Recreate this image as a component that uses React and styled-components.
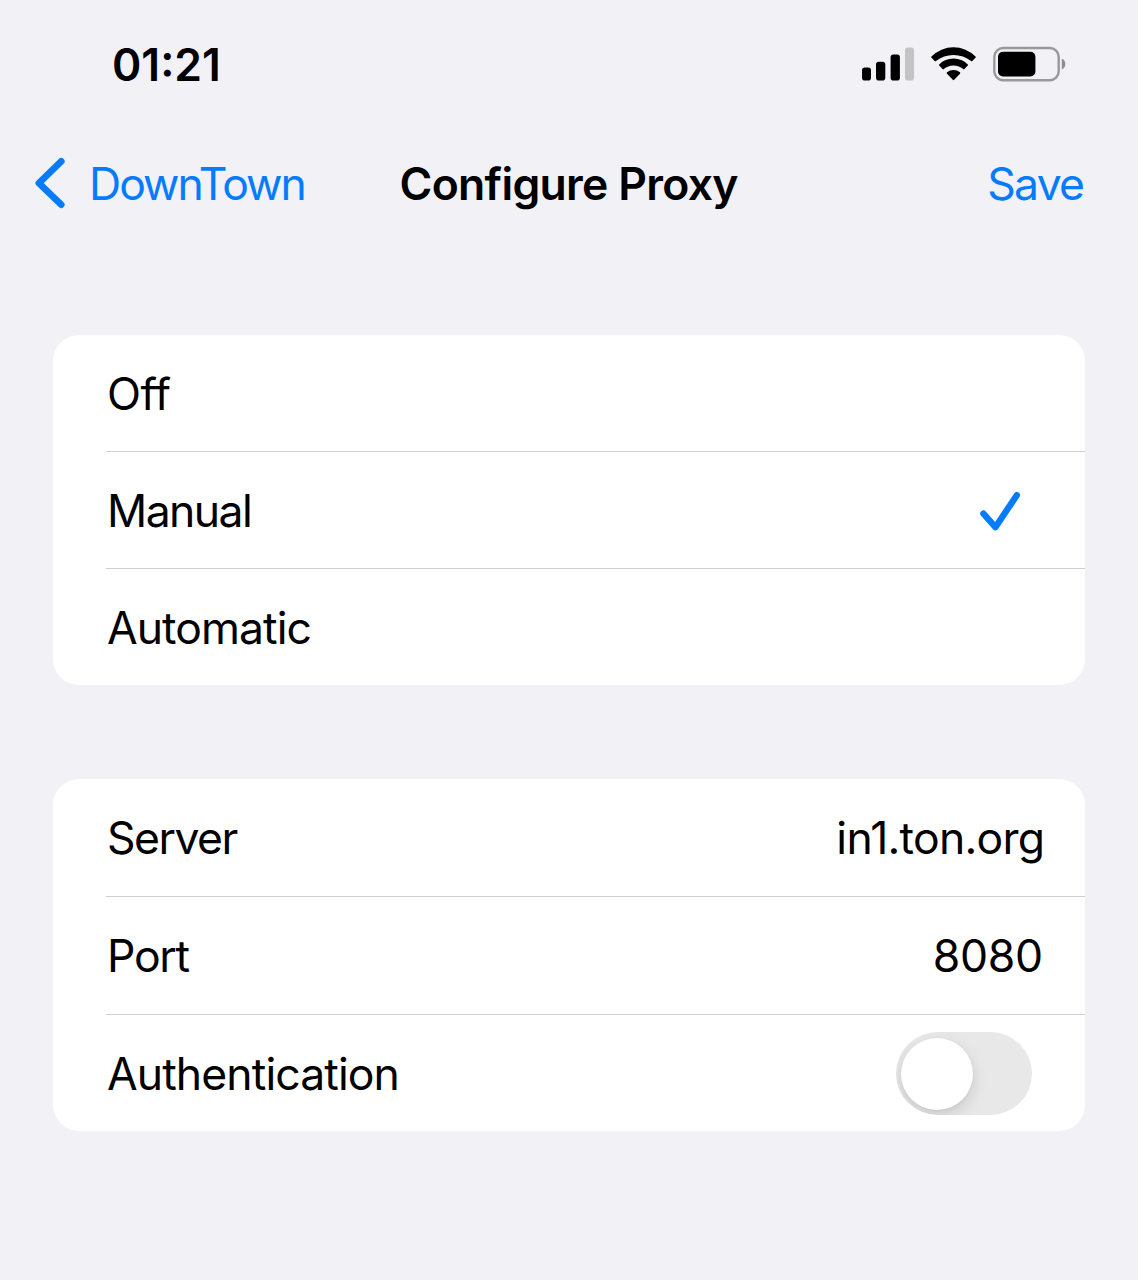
import React from "react";
import styled, { createGlobalStyle } from "styled-components";

const BLUE = "#067bfb";

const GlobalStyle = createGlobalStyle`
  * { box-sizing: border-box; }
  body {
    margin: 0;
    background: #f1f1f6;
    font-family: Inter, "Liberation Sans", sans-serif;
    color: #000;
  }
`;

const Screen = styled.div`
  width: 1138px;
  height: 1280px;
  overflow: hidden;
  display: flex;
  flex-direction: column;
  background: #f1f1f6;
`;

const Label = styled.span`
  font-size: 44.5px;
  line-height: 54px;
  white-space: nowrap;
  font-weight: ${(p) => p.$weight || 400};
  letter-spacing: ${(p) => p.$track || 0}px;
  margin-right: ${(p) => -(p.$track || 0)}px;
  padding-top: ${(p) => p.$drop || 0}px;
`;

const StatusBar = styled.header`
  height: 128px;
  padding: 0 72px 0 112px;
  display: flex;
  align-items: center;
  justify-content: space-between;
`;

const StatusIcons = styled.div`
  display: flex;
  align-items: center;
  gap: 17px;
  svg { display: block; }
`;

const NavBar = styled.nav`
  height: 109px;
  padding: 0 53px 0 34px;
  display: grid;
  grid-template-columns: 1fr auto 1fr;
  align-items: center;
`;

const NavButton = styled.button`
  display: flex;
  align-items: center;
  gap: 23px;
  justify-self: ${(p) => p.$side};
  padding: 0;
  border: 0;
  background: none;
  font-family: inherit;
  color: ${BLUE};
  svg { display: block; }
`;

const Title = styled.h1`
  margin: 0;
  padding-left: 19px;
  line-height: 54px;
  display: flex;
`;

const Groups = styled.main`
  padding: 98px 53px 0;
  display: flex;
  flex-direction: column;
  gap: 94px;
`;

const Group = styled.section`
  padding-left: 53px;
  display: flex;
  flex-direction: column;
  background: #fff;
  border-radius: 26px;
`;

const Row = styled.div`
  height: ${(p) => p.$height || 117}px;
  display: flex;
  align-items: center;
  justify-content: space-between;
  padding: 1px ${(p) => p.$right || 0}px 0 1px;
  & + & { border-top: 1px solid #cfcfd1; }
  svg { display: block; }
`;

const Toggle = styled.div`
  width: 136px;
  height: 83px;
  padding: 5.5px 5px;
  border-radius: 42px;
  background: #e8e8e8;
  overflow: hidden;
`;

const Knob = styled.div`
  width: 72px;
  height: 72px;
  border-radius: 50%;
  background: #fff;
  box-shadow: 0 6px 16px rgba(0, 0, 0, 0.13), 0 1px 3px rgba(0, 0, 0, 0.05);
`;

const Signal = () => (
  <svg width="52" height="34" viewBox="0 0 52 34">
    <rect x="0" y="20.5" width="9" height="13" rx="2.8" />
    <rect x="14" y="14.8" width="9.3" height="18.7" rx="2.8" />
    <rect x="28.6" y="7.5" width="9.3" height="26" rx="2.8" />
    <rect x="43" y="0.5" width="9" height="33" rx="2.8" fill="#c3c3c6" />
  </svg>
);

const Wifi = () => (
  <svg width="45" height="34" viewBox="0 0 45 34">
    <path d="M.5 9.6A30.8 30.8 0 0 1 44.5 9.6Q45.1 10.2 44.5 10.8L41.3 14.1Q40.7 14.7 40.1 14.1A28 28 0 0 0 4.9 14.1Q4.3 14.7 3.7 14.1L.5 10.8Q-.1 10.2 .5 9.6Z" />
    <path d="M8.2 17.4A20.5 20.5 0 0 1 36.8 17.4Q37.4 18 36.8 18.6L33.4 22.1Q32.8 22.7 32.2 22.1A14.5 14.5 0 0 0 12.8 22.1Q12.2 22.7 11.6 22.1L8.2 18.6Q7.6 18 8.2 17.4Z" />
    <path d="M16 25.3A10 10 0 0 1 29 25.3Q29.7 26 29 26.7L23.2 32.8Q22.5 33.5 21.8 32.8L16 26.7Q15.3 26 16 25.3Z" />
  </svg>
);

const Battery = () => (
  <svg width="73" height="36" viewBox="1 0 73 36">
    <rect x="1.9" y="2" width="64.4" height="32.2" rx="9" fill="none" stroke="#99999c" strokeWidth="2.4" transform="translate(.4 0)" />
    <rect x="6" y="5.8" width="37.4" height="24.6" rx="5" />
    <path d="M69.8 12.8C72.2 13.7 73.3 15.6 73.3 18.1S72.2 22.5 69.8 23.4Z" fill="#8d8d90" />
  </svg>
);

const Chevron = () => (
  <svg width="32" height="52" viewBox="0 0 32 52">
    <path d="M27.2 4.4L4.9 26.1L27.2 47.6" fill="none" stroke={BLUE} strokeWidth="6.8" strokeLinecap="round" strokeLinejoin="round" />
  </svg>
);

const Check = () => (
  <svg width="40" height="40" viewBox="0 0 40 40">
    <path d="M3.4 22.6L15.4 36.2L36.8 4.2" fill="none" stroke={BLUE} strokeWidth="6.4" strokeLinecap="round" strokeLinejoin="round" />
  </svg>
);

export default function App() {
  return (
    <Screen>
      <GlobalStyle />
      <StatusBar>
        <Label $weight={600} $drop={2}>01:21</Label>
        <StatusIcons>
          <Signal />
          <Wifi />
          <Battery />
        </StatusIcons>
      </StatusBar>
      <NavBar>
        <NavButton $side="start">
          <Chevron />
          <Label $drop={2} $track={-1.95}>DownTown</Label>
        </NavButton>
        <Title>
          <Label $drop={2} $weight={600} $track={-0.7}>Configure Proxy</Label>
        </Title>
        <NavButton $side="end">
          <Label $drop={2} $track={-1.75}>Save</Label>
        </NavButton>
      </NavBar>
      <Groups>
        <Group>
          <Row $height={116}><Label $track={-0.6}>Off</Label></Row>
          <Row $right={65}>
            <Label $track={-1.55}>Manual</Label>
            <Check />
          </Row>
          <Row><Label $track={-0.95}>Automatic</Label></Row>
        </Group>
        <Group>
          <Row $right={40}>
            <Label $track={-1.5}>Server</Label>
            <Label $track={-0.75}>in1.ton.org</Label>
          </Row>
          <Row $height={118} $right={42}>
            <Label $track={-1.3}>Port</Label>
            <Label $track={-0.3}>8080</Label>
          </Row>
          <Row $right={53}>
            <Label $track={-0.9}>Authentication</Label>
            <Toggle><Knob /></Toggle>
          </Row>
        </Group>
      </Groups>
    </Screen>
  );
}
